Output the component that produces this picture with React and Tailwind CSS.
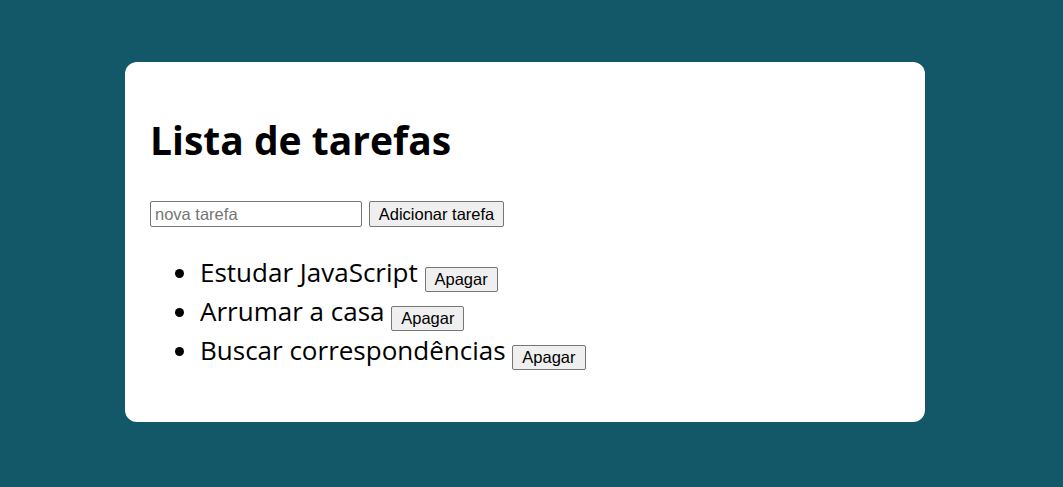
import React, { useState } from 'react';

const INITIAL = ['Estudar JavaScript', 'Arrumar a casa', 'Buscar correspondências'];

export default function App() {
  const [tasks, setTasks] = useState(INITIAL);
  const [text, setText] = useState('');

  const addTask = () => {
    if (!text.trim()) return;
    setTasks([...tasks, text.trim()]);
    setText('');
  };

  const removeTask = (i) => setTasks(tasks.filter((_, idx) => idx !== i));

  return (
    <div className="min-h-[487px] bg-[#125868] pt-[62px] font-['Open_Sans',sans-serif]">
      <div className="ml-[125px] w-[800px] h-[360px] rounded-xl bg-white px-[25px] pt-[52px]">
        <h1 className="text-[39px] font-bold leading-[52px] text-black">Lista de tarefas</h1>

        <div className="mt-[35px] flex items-center gap-[7px] font-['Liberation_Sans',Arial,sans-serif] text-[16.5px]">
          <input
            value={text}
            onChange={(e) => setText(e.target.value)}
            placeholder="nova tarefa"
            className="h-[26px] w-[212px] border border-[#767676] rounded-[2px] px-[4px] text-black placeholder:text-[#757575] outline-none"
          />
          <button
            onClick={addTask}
            className="h-[26px] w-[135px] rounded-[2px] border border-[#767676] bg-[#efefef] text-black"
          >
            Adicionar tarefa
          </button>
        </div>

        <ul className="mt-[26px] list-disc pl-[50px] text-[26px] text-black">
          {tasks.map((t, i) => (
            <li key={i} className="h-[39px] leading-[39px]">
              {t}{' '}
              <button
                onClick={() => removeTask(i)}
                className="h-[25px] rounded-[2px] border border-[#767676] bg-[#efefef] px-[9px] align-[-3px] font-['Liberation_Sans',Arial,sans-serif] text-[16.5px] leading-[23px] text-black"
              >
                Apagar
              </button>
            </li>
          ))}
        </ul>
      </div>
    </div>
  );
}
